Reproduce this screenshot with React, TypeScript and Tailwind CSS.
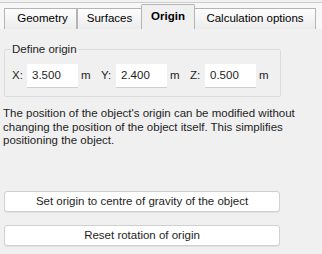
import React from "react";

const font = { fontFamily: '"Segoe UI", "Liberation Sans", Arial, sans-serif' };

function Tab({ label, w, active = false, first = false }: { label: string; w: string; active?: boolean; first?: boolean }) {
  if (active) {
    return (
      <div className={`relative z-10 -mx-[1px] flex h-[25px] items-center justify-center whitespace-nowrap rounded-t-[2px] border border-b-0 border-[#b4b4b4] bg-[#f0f0f0] font-bold text-black ${w}`}>
        {label}
      </div>
    );
  }
  return (
    <div
      className={`flex h-[21px] items-center justify-center whitespace-nowrap border border-b-0 border-[#b4b4b4] bg-gradient-to-b from-[#fdfdfd] to-[#ececec] text-black ${w} ${first ? "pl-[4px]" : ""}`}
    >
      {label}
    </div>
  );
}

function Field({ axis, value }: { axis: string; value: string }) {
  return (
    <div className="flex items-center">
      <span className="w-[15px]">{axis}</span>
      <div className="flex h-[24px] w-[51px] items-center border-b border-[#cfcfcf] bg-white pl-[5px]">{value}</div>
      <span className="ml-[3px] w-[20px]">m</span>
    </div>
  );
}

export default function App() {
  return (
    <div className="h-[254px] w-[322px] overflow-hidden bg-[#f0f0f0] text-[11.5px] text-[#1e1e1e]" style={font}>
      <div className="mt-[2px] flex h-[27px] items-end border-t border-[#cdcdcd] bg-[#f7f7f7]">
        <div className="ml-[4px] flex items-end">
          <Tab label="Geometry" w="w-[73px]" first />
          <Tab label="Surfaces" w="w-[65px]" />
          <Tab label="Origin" w="w-[54px]" active />
          <Tab label="Calculation options" w="w-[122px]" />
        </div>
      </div>
      <div className="px-[4px] pt-[13px]">
        <fieldset className="h-[55px] w-[277px] rounded-[2px] border border-[#dcdcdc] pl-[7px]">
          <legend className="ml-[-1px] px-[1px] leading-[14px]">Define origin</legend>
          <div className="mt-[8px] flex items-center">
            <Field axis="X:" value="3.500" />
            <Field axis="Y:" value="2.400" />
            <Field axis="Z:" value="0.500" />
          </div>
        </fieldset>
        <p className="ml-[-1px] mt-[10px] leading-[13.5px]">
          The position of the object's origin can be modified without changing the position of the object itself. This simplifies positioning the object.
        </p>
        <div className="mt-[43px] flex w-[276px] flex-col gap-[13px]">
          <button className="h-[21px] rounded-[3px] border border-[#d0d0d0] bg-white leading-[19px] shadow-[0_1px_0_#e2e2e2]">Set origin to centre of gravity of the object</button>
          <button className="h-[21px] rounded-[3px] border border-[#d0d0d0] bg-white leading-[19px] shadow-[0_1px_0_#e2e2e2]">Reset rotation of origin</button>
        </div>
      </div>
    </div>
  );
}
